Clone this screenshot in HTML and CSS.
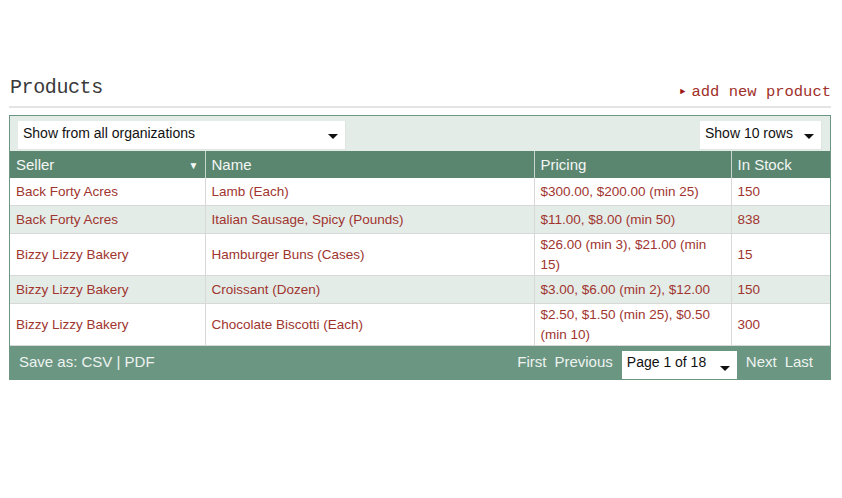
FILE: index.html
```html
<!DOCTYPE html>
<html>
<head>
<meta charset="utf-8">
<link rel="stylesheet" href="styles.css">
</head>
<body>
<div class="page">
  <div class="head">
    <h1 class="title">Products</h1>
    <a class="add" href="#"><span class="tri">&#9658;</span>add new product</a>
  </div>
  <div class="grid">
    <div class="toolbar">
      <div class="sel sel-org">Show from all organizations<span class="caret"></span></div>
      <div class="sel sel-rows">Show 10 rows<span class="caret"></span></div>
    </div>
    <table class="tbl">
      <colgroup>
        <col class="c1"><col class="c2"><col class="c3"><col class="c4">
      </colgroup>
      <thead>
        <tr><th class="sorted">Seller<span class="sort">&#9660;</span></th><th>Name</th><th>Pricing</th><th>In Stock</th></tr>
      </thead>
      <tbody>
        <tr><td>Back Forty Acres</td><td>Lamb (Each)</td><td>$300.00, $200.00 (min 25)</td><td>150</td></tr>
        <tr class="alt"><td>Back Forty Acres</td><td>Italian Sausage, Spicy (Pounds)</td><td>$11.00, $8.00 (min 50)</td><td>838</td></tr>
        <tr><td>Bizzy Lizzy Bakery</td><td>Hamburger Buns (Cases)</td><td>$26.00 (min 3), $21.00 (min 15)</td><td>15</td></tr>
        <tr class="alt"><td>Bizzy Lizzy Bakery</td><td>Croissant (Dozen)</td><td>$3.00, $6.00 (min 2), $12.00</td><td>150</td></tr>
        <tr><td>Bizzy Lizzy Bakery</td><td>Chocolate Biscotti (Each)</td><td>$2.50, $1.50 (min 25), $0.50 (min 10)</td><td>300</td></tr>
      </tbody>
    </table>
    <div class="foot">
      <div class="save">Save as: CSV | PDF</div>
      <div class="pager">
        <span>First</span><span>Previous</span>
        <div class="sel sel-page">Page 1 of 18<span class="caret"></span></div>
        <span>Next</span><span>Last</span>
      </div>
    </div>
  </div>
</div>
</body>
</html>
```
FILE: styles.css
```css
html, body { margin: 0; padding: 0; background: #fff; }
body { font-family: "Liberation Sans", Arial, sans-serif; }
.page { width: 822px; margin: 0 0 0 9px; padding-top: 76px; }
.head {
  display: flex; justify-content: space-between; align-items: flex-end;
  border-bottom: 2px solid #e4e4e4; padding: 0 0 6px 1px;
}
.title {
  margin: 0; font-family: "Liberation Mono", "Courier New", monospace;
  font-weight: normal; font-size: 20px; line-height: 24px; color: #3a3a3a;
  letter-spacing: -0.4px;
}
.add {
  font-family: "Liberation Mono", "Courier New", monospace; font-size: 15.5px;
  color: #a0302a; text-decoration: none; line-height: 20px; margin-bottom: -2px;
}
.tri { font-size: 9px; margin-right: 6px; vertical-align: 2px; color: #9a1a15; }
.grid { margin-top: 7px; border: 1px solid #6d9783; border-bottom: none; }
.toolbar {
  background: #e4ece8; display: flex; justify-content: space-between;
  padding: 5px 8px 2px 8px; height: 28px;
}
.sel {
  background: #fff; font-size: 14px; color: #111; line-height: 20px;
  padding: 2px 5px; height: 24px; position: relative; box-sizing: content-box;
  border: 1px solid #dfe6e2; border-top: none; border-left: none;
}
.sel-org { width: 317px; }
.sel-rows { width: 111px; }
.sel-page { width: 105px; height: 28px; line-height: 22px; padding: 0 5px; margin: 0 9px 0 9px; border: none; }
.caret {
  position: absolute; right: 7px; top: 13px; width: 0; height: 0;
  border-left: 5px solid transparent; border-right: 5px solid transparent;
  border-top: 5px solid #111;
}
.sel-page .caret { top: 15px; }
.tbl { width: 820px; border-collapse: collapse; table-layout: fixed; font-size: 13.5px; }
.c1 { width: 195px; } .c2 { width: 329px; } .c3 { width: 197px; } .c4 { width: 99px; }
.tbl th {
  background: #5a8670; color: #f4f7f5; font-weight: normal; font-size: 15px;
  text-align: left; height: 27px; padding: 0 6px; border-left: 1px solid #c8d6cf;
}
.tbl th:first-child { border-left: none; }
.sorted { position: relative; }
.sort { position: absolute; right: 6px; top: 9px; font-size: 10px; }
.tbl td {
  color: #a0352f; height: 26px; padding: 1px 6px 0 6px; line-height: 20px;
  border: 1px solid #d8d8d8; border-top: none; vertical-align: middle;
}
.tbl td:first-child { border-left: none; }
.tbl td:last-child { border-right: none; }
.tbl tr.alt td { background: #e4ece8; }
.foot {
  background: #6a9682; color: #eef3f0; height: 29px; display: flex;
  justify-content: space-between; align-items: flex-start; font-size: 15px;
  padding: 5px 17px 0 9px;
}
.save { line-height: 22px; }
.pager { display: flex; align-items: flex-start; }
.pager > span { margin-left: 8px; line-height: 22px; }
.pager > span:first-child { margin-left: 0; }
.pager > .sel + span { margin-left: 0; }
```
